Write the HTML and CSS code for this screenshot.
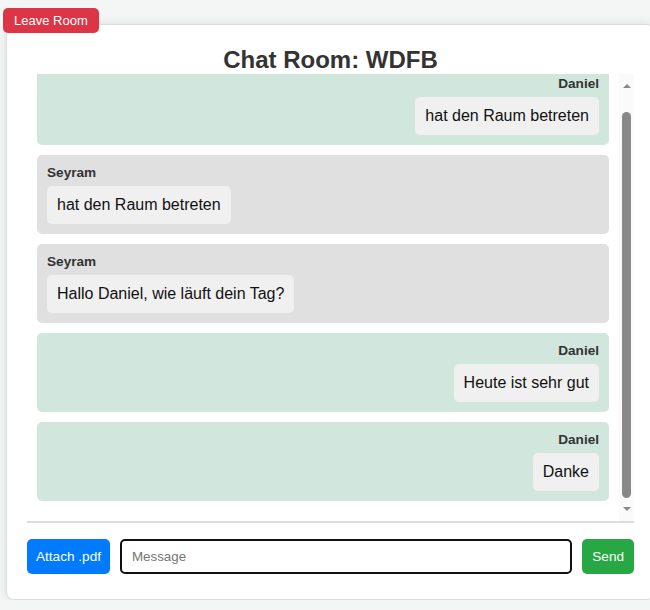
FILE: index.html
```html
<!DOCTYPE html>
<html lang="de">
<head>
<meta charset="utf-8">
<title>Chat Room: WDFB</title>
<link rel="stylesheet" href="styles.css">
</head>
<body>
<div class="page">
  <button class="leave-btn">Leave Room</button>
  <div class="card">
    <h2 class="title">Chat Room: WDFB</h2>
    <div class="chat-body">
      <div class="messages" id="messages">
        <div class="msg msg-own">
          <div class="msg-name">Daniel</div>
          <div class="msg-text">hat den Raum betreten</div>
        </div>
        <div class="msg msg-other">
          <div class="msg-name">Seyram</div>
          <div class="msg-text">hat den Raum betreten</div>
        </div>
        <div class="msg msg-other">
          <div class="msg-name">Seyram</div>
          <div class="msg-text">Hallo Daniel, wie läuft dein Tag?</div>
        </div>
        <div class="msg msg-own">
          <div class="msg-name">Daniel</div>
          <div class="msg-text">Heute ist sehr gut</div>
        </div>
        <div class="msg msg-own">
          <div class="msg-name">Daniel</div>
          <div class="msg-text">Danke</div>
        </div>
      </div>
      <div class="scrollbar" aria-hidden="true">
        <div class="sb-btn sb-up"><span class="arrow-up"></span></div>
        <div class="sb-track"><div class="sb-thumb"></div></div>
        <div class="sb-btn sb-down"><span class="arrow-down"></span></div>
      </div>
    </div>
    <div class="composer">
      <button class="btn btn-attach">Attach .pdf</button>
      <input class="msg-input" type="text" placeholder="Message">
      <button class="btn btn-send">Send</button>
    </div>
  </div>
</div>
<script src="script.js"></script>
</body>
</html>
```

FILE: styles.css
```css
html {
  overflow: hidden;
}
body {
  margin: 0;
  background: #f4f5f5;
  font-family: "Liberation Sans", Arial, sans-serif;
  color: #333;
}
.page {
  position: relative;
  padding: 24px 0 0 6px;
}
.leave-btn {
  position: absolute;
  left: 3px;
  top: 8px;
  z-index: 2;
  background: #dc3545;
  color: #fff;
  border: none;
  border-radius: 5px;
  padding: 5px 11px;
  font-family: "Liberation Sans", Arial, sans-serif;
  font-size: 13px;
  line-height: 15px;
}
.card {
  box-sizing: border-box;
  width: 649px;
  background: #fff;
  border: 1px solid #ddd;
  border-radius: 8px;
  box-shadow: 0 0 10px rgba(0, 0, 0, 0.1);
  padding: 21px 20px 25px 20px;
}
.title {
  margin: 0;
  text-align: center;
  font-size: 24px;
  font-weight: bold;
  color: #333;
}
.chat-body {
  display: flex;
  height: 447px;
}
.messages {
  flex: 1;
  min-width: 0;
  box-sizing: border-box;
  overflow: hidden;
  padding: 10px;
}
.scrollbar {
  width: 15px;
  flex: none;
  display: flex;
  flex-direction: column;
  background: #fafafa;
}
.sb-btn {
  height: 17px;
  flex: none;
  display: flex;
  justify-content: center;
}
.sb-up {
  align-items: flex-start;
  padding-top: 10px;
  box-sizing: border-box;
}
.sb-down {
  align-items: flex-start;
  padding-top: 3px;
  box-sizing: border-box;
}
.arrow-up {
  width: 0;
  height: 0;
  border-left: 4.5px solid transparent;
  border-right: 4.5px solid transparent;
  border-bottom: 4px solid #888;
}
.arrow-down {
  width: 0;
  height: 0;
  border-left: 4.5px solid transparent;
  border-right: 4.5px solid transparent;
  border-top: 4px solid #888;
}
.sb-track {
  flex: 1;
  display: flex;
  flex-direction: column;
  justify-content: flex-end;
  padding: 0 3px 6px 3px;
}
.sb-thumb {
  height: 386px;
  background: #888;
  border-radius: 4.5px;
}
.msg {
  display: flex;
  flex-direction: column;
  padding: 10px;
  margin-bottom: 10px;
  border-radius: 5px;
}
.msg-own {
  background: #d1e7dd;
  align-items: flex-end;
}
.msg-other {
  background: #e0e0e0;
  align-items: flex-start;
}
.msg-name {
  font-size: 13.6px;
  font-weight: bold;
  color: #333;
  margin-bottom: 6px;
}
.msg-text {
  background: #f0f0f0;
  color: #111;
  font-size: 16px;
  padding: 10px;
  border-radius: 5px;
}
.composer {
  display: flex;
  gap: 10px;
  border-top: 2px solid #ddd;
  padding-top: 16px;
}
.btn {
  border: none;
  border-radius: 5px;
  color: #fff;
  padding: 10px 9px;
  font-family: "Liberation Sans", Arial, sans-serif;
  font-size: 13.6px;
}
.btn-attach {
  background: #007bff;
}
.btn-send {
  background: #28a745;
  padding: 10px 10px;
}
.msg-input {
  flex: 1;
  min-width: 0;
  box-sizing: border-box;
  border: 2px solid #111;
  border-radius: 5px;
  padding: 0 10px;
  font-family: "Liberation Sans", Arial, sans-serif;
  font-size: 13.33px;
  outline: none;
}
.msg-input::placeholder {
  color: #757575;
}
```

FILE: script.js
```js
var m = document.getElementById('messages');
m.scrollTop = m.scrollHeight;
```
